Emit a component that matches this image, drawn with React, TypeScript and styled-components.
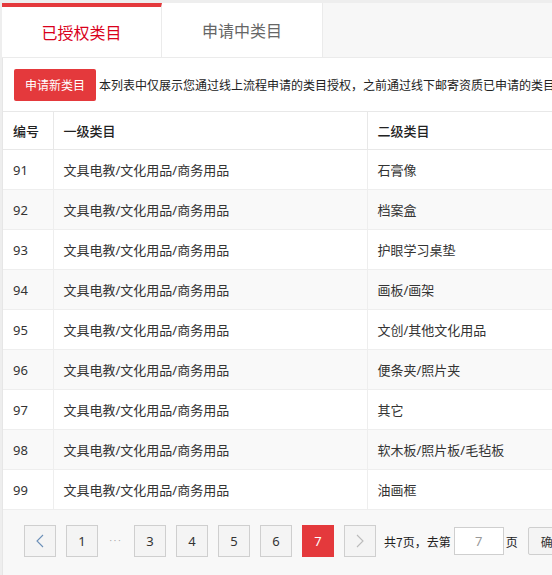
import React from 'react';
import styled, { createGlobalStyle } from 'styled-components';

const red = '#e4393c';

const GlobalStyle = createGlobalStyle`
  html, body {
    margin: 0;
    padding: 0;
    overflow: hidden;
    background: #eeeeee;
  }
  body {
    font-family: 'Noto Sans', 'Noto Sans CJK SC', sans-serif;
    color: #333;
  }
`;

const Page = styled.div`
  padding: 3px 0 0 2px;
  width: 800px;
  height: 575px;
  box-sizing: border-box;
  display: flex;
  flex-direction: column;
`;

const TabBar = styled.div`
  display: flex;
  background: #f7f7f7;
  border-bottom: 1px solid #ebebeb;
`;

const Tab = styled.div<{ active?: boolean; width: number }>`
  width: ${({ width }) => width}px;
  height: 54px;
  box-sizing: border-box;
  display: flex;
  align-items: center;
  justify-content: center;
  background: #fff;
  border-right: 1px solid #ebebeb;
  border-top: ${({ active }) => (active ? `4px solid ${red}` : 'none')};
  font-family: 'Noto Sans CJK SC', sans-serif;
  font-size: 16px;
  color: ${({ active }) => (active ? '#d9001b' : '#666')};
`;

const Panel = styled.div`
  flex: 1;
  display: flex;
  flex-direction: column;
  background: #fff;
  border-left: 1px solid #e6e6e6;
`;

const Toolbar = styled.div`
  display: flex;
  align-items: center;
  height: 53px;
  padding: 0 11px;
  box-sizing: border-box;
  white-space: nowrap;
`;

const RedButton = styled.button`
  height: 32px;
  width: 82px;
  padding: 0;
  border: none;
  border-radius: 2px;
  background: ${red};
  color: #fff;
  font-family: 'Noto Sans CJK SC', sans-serif;
  font-size: 12px;
`;

const Note = styled.span`
  margin-left: 3px;
  font-family: 'Noto Sans CJK SC', sans-serif;
  font-size: 12px;
  color: #222;
`;

const Table = styled.table`
  width: 100%;
  border-collapse: collapse;
  table-layout: fixed;
  font-size: 13px;
`;

const HeadCell = styled.th`
  height: 37px;
  padding: 0 10px;
  text-align: left;
  font-weight: 500;
  color: #222;
  border-top: 1px solid #e8e8e8;
  border-bottom: 1px solid #e8e8e8;
  border-right: 1px solid #e8e8e8;
`;

const Row = styled.tr<{ striped?: boolean }>`
  background: ${({ striped }) => (striped ? '#f9f9f9' : '#fff')};
`;

const Cell = styled.td`
  height: 39px;
  padding: 0 10px;
  color: #333;
  border-bottom: 1px solid #eeeeee;
  border-right: 1px solid #eeeeee;
  white-space: nowrap;
`;

const Footer = styled.div`
  flex: 1;
  background: #f8f8f8;
  display: flex;
  align-items: flex-start;
  gap: 10px;
  padding: 15px 0 0 21px;
  white-space: nowrap;
`;

const PageButton = styled.div<{ current?: boolean }>`
  width: 32px;
  height: 32px;
  box-sizing: border-box;
  display: flex;
  align-items: center;
  justify-content: center;
  border: 1px solid ${({ current }) => (current ? red : '#cfcfcf')};
  background: ${({ current }) => (current ? red : '#f4f4f4')};
  color: ${({ current }) => (current ? '#fff' : '#333')};
  font-size: 13px;
`;

const Dots = styled.span`
  width: 16px;
  line-height: 32px;
  color: #aaa;
  font-size: 9px;
  letter-spacing: 2px;
  text-align: center;
`;

const Jump = styled.div`
  display: flex;
  align-items: center;
  height: 32px;
  margin-left: -2px;
  font-family: 'Noto Sans CJK SC', sans-serif;
  font-size: 12px;
  color: #222;
`;

const PageInput = styled.div`
  width: 50px;
  height: 28px;
  box-sizing: border-box;
  margin: 0 2px 0 3px;
  display: flex;
  align-items: center;
  justify-content: center;
  border: 1px solid #cfcfcf;
  background: #fff;
  color: #999;
  font-family: 'Noto Sans', sans-serif;
  font-size: 13px;
`;

const ConfirmButton = styled.div`
  height: 28px;
  margin-left: 10px;
  padding: 0 12px;
  box-sizing: border-box;
  display: flex;
  align-items: center;
  border: 1px solid #cfcfcf;
  border-radius: 2px;
  background: #f4f4f4;
  color: #333;
`;

const Chevron = ({ dir, color }: { dir: 'left' | 'right'; color: string }) => (
  <svg width="8" height="14" viewBox="0 0 8 14">
    <path
      d={dir === 'left' ? 'M7 1 L1 7 L7 13' : 'M1 1 L7 7 L1 13'}
      fill="none"
      stroke={color}
      strokeWidth="1.1"
    />
  </svg>
);

const second = [
  '石膏像',
  '档案盒',
  '护眼学习桌垫',
  '画板/画架',
  '文创/其他文化用品',
  '便条夹/照片夹',
  '其它',
  '软木板/照片板/毛毡板',
  '油画框',
];

const rows = second.map((name, i) => ({
  id: 91 + i,
  first: '文具电教/文化用品/商务用品',
  name,
}));

export default function App() {
  return (
    <>
      <GlobalStyle />
      <Page>
        <TabBar>
          <Tab active width={160}>已授权类目</Tab>
          <Tab width={161}>申请中类目</Tab>
        </TabBar>
        <Panel>
          <Toolbar>
            <RedButton>申请新类目</RedButton>
            <Note>
              本列表中仅展示您通过线上流程申请的类目授权，之前通过线下邮寄资质已申请的类目授权不在此列表中展示
            </Note>
          </Toolbar>
          <Table>
            <colgroup>
              <col style={{ width: 50 }} />
              <col style={{ width: 314 }} />
              <col />
            </colgroup>
            <thead>
              <tr>
                <HeadCell>编号</HeadCell>
                <HeadCell>一级类目</HeadCell>
                <HeadCell>二级类目</HeadCell>
              </tr>
            </thead>
            <tbody>
              {rows.map((r, i) => (
                <Row key={r.id} striped={i % 2 === 1}>
                  <Cell>{r.id}</Cell>
                  <Cell>{r.first}</Cell>
                  <Cell>{r.name}</Cell>
                </Row>
              ))}
            </tbody>
          </Table>
          <Footer>
            <PageButton>
              <Chevron dir="left" color="#6b8fb8" />
            </PageButton>
            <PageButton>1</PageButton>
            <Dots>···</Dots>
            <PageButton>3</PageButton>
            <PageButton>4</PageButton>
            <PageButton>5</PageButton>
            <PageButton>6</PageButton>
            <PageButton current>7</PageButton>
            <PageButton>
              <Chevron dir="right" color="#bbb" />
            </PageButton>
            <Jump>
              共7页，去第
              <PageInput>7</PageInput>
              页
              <ConfirmButton>确定</ConfirmButton>
            </Jump>
          </Footer>
        </Panel>
      </Page>
    </>
  );
}
